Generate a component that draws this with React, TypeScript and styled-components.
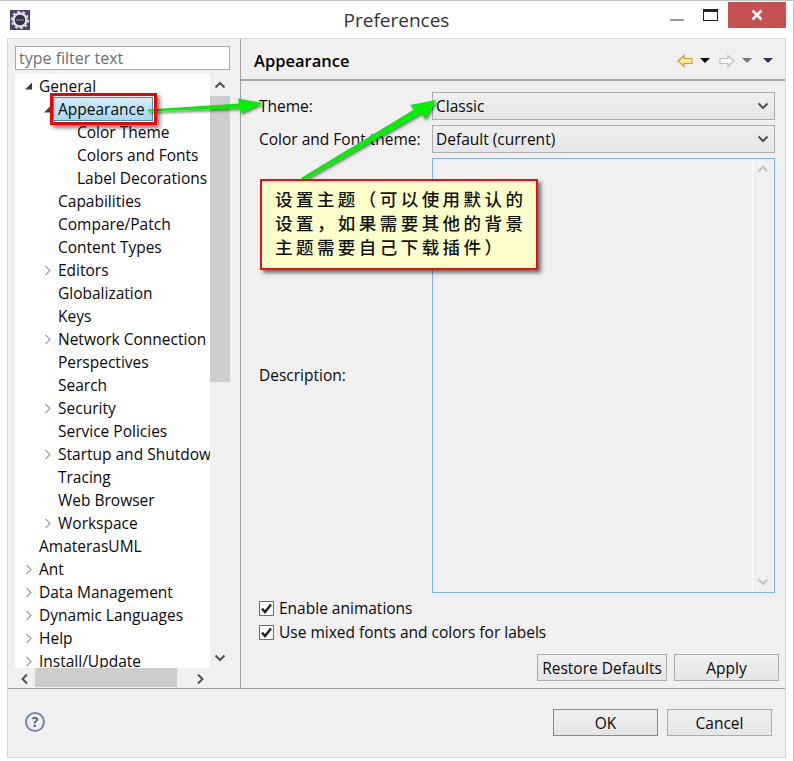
import React from 'react'
import styled, { createGlobalStyle } from 'styled-components'

const GlobalStyle = createGlobalStyle`
  html, body {
    margin: 0;
    padding: 0;
    background: #fff;
    overflow: hidden;
  }
  * {
    box-sizing: border-box;
  }
`

const uiFont = `'Open Sans', 'Noto Sans', sans-serif`

const Page = styled.div`
  position: relative;
  width: 794px;
  height: 761px;
  padding-top: 1px;
  background: #fff;
  border-top: 1px solid #c4c4c4;
  border-right: 1px solid #c4c4c4;
  font-family: ${uiFont};
  font-size: 15.5px;
  color: #0a0a0a;
  overflow: hidden;
`

const TitleBar = styled.div`
  position: relative;
  display: flex;
  align-items: flex-start;
  height: 36px;
  padding-left: 10px;
`

const AppIcon = styled.svg`
  width: 20px;
  height: 20px;
  margin-top: 8px;
`

const Title = styled.div`
  position: absolute;
  left: 0;
  right: 0;
  top: 5px;
  text-align: center;
  font-size: 19px;
  line-height: 26px;
  color: #333;
`

const WindowButtons = styled.div`
  display: flex;
  align-items: flex-start;
  margin-left: auto;
  margin-right: 7px;
`

const MinimizeIcon = styled.span`
  width: 14px;
  height: 2px;
  margin-top: 17px;
  margin-right: 19px;
  background: #9a9a9a;
`

const MaximizeIcon = styled.span`
  width: 15px;
  height: 12px;
  margin-top: 7px;
  margin-right: 10px;
  border: 1px solid #222;
  border-top-width: 3px;
`

const CloseButton = styled.div`
  display: flex;
  align-items: center;
  justify-content: center;
  width: 58px;
  height: 26px;
  background: #c75050;
`

const Body = styled.div`
  width: 779px;
  height: 720px;
  margin-left: 7px;
  background: #f0f0f0;
  border: 1px solid #d9d9d9;
`

const Main = styled.div`
  display: flex;
  height: 649px;
`

const LeftPane = styled.div`
  flex: none;
  width: 232px;
  padding: 7px 10px 0 7px;
`

const FilterInput = styled.div`
  height: 24px;
  padding: 0 3px;
  border: 1px solid #ababab;
  background: #fff;
  line-height: 22px;
  color: #6f6f6f;
  font-size: 16px;
`

const TreeArea = styled.div`
  display: grid;
  grid-template-columns: 195px 20px;
  grid-template-rows: 594px 19px;
  margin-top: 4px;
`

const Tree = styled.div`
  background: #fff;
  overflow: hidden;
`

const Row = styled.div<{ $level: number }>`
  display: flex;
  align-items: center;
  height: 23px;
  padding-left: ${(p) => 8 + p.$level * 19}px;
  white-space: nowrap;
`

const Twisty = styled.svg`
  flex: none;
  width: 16px;
  height: 23px;
`

const RowLabel = styled.span<{ $selected?: boolean }>`
  line-height: 22px;
  padding: 0 4px;
  margin-left: -4px;
  ${(p) =>
    p.$selected &&
    `
    background: linear-gradient(#d4ecf9, #a9d8f0);
    border: 1px solid #4d8ca8;
    margin-left: -5px;
    margin-right: -1px;
    padding-right: 7px;
  `}
`

const VScrollbar = styled.div`
  display: flex;
  flex-direction: column;
  align-items: stretch;
  padding-top: 1px;
`

const ScrollCap = styled.div`
  display: flex;
  align-items: center;
  justify-content: center;
  flex: none;
  width: 20px;
  height: 21px;
`

const VThumb = styled.div`
  height: 286px;
  background: #cdcdcd;
`

const ScrollSpacer = styled.div`
  flex: 1;
`

const HScrollbar = styled.div`
  grid-column: 1 / span 2;
  display: flex;
  align-items: stretch;
`

const HThumb = styled.div`
  width: 142px;
  background: #cdcdcd;
`

const RightPane = styled.div`
  flex: 1;
  border-left: 1px solid #a0a0a0;
`

const PaneHeader = styled.div`
  display: flex;
  align-items: center;
  height: 42px;
  padding: 3px 12px 0 13px;
  border-bottom: 2px solid #a6a6a6;
`

const PaneTitle = styled.h1`
  margin: 0;
  font-size: 16.5px;
  font-weight: 600;
  color: #000;
`

const PaneTools = styled.div`
  display: flex;
  align-items: center;
  margin-left: auto;
`

const ToolArrow = styled.svg<{ $gap?: number }>`
  width: 16px;
  height: 14px;
  margin-left: ${(p) => p.$gap ?? 0}px;
`

const ToolCaret = styled.span<{ $color: string; $gap: number }>`
  width: 0;
  height: 0;
  margin: 0 0 0 ${(p) => p.$gap}px;
  border-left: 5px solid transparent;
  border-right: 5px solid transparent;
  border-top: 5px solid ${(p) => p.$color};
`

const Form = styled.div`
  display: grid;
  grid-template-columns: 173px 343px;
  grid-template-rows: 28px 28px 435px;
  row-gap: 5px;
  margin: 11px 0 0 18px;
`

const FieldLabel = styled.div`
  align-self: center;
`

const DescriptionLabel = styled(FieldLabel)`
  padding-bottom: 2px;
`

const Select = styled.div`
  display: flex;
  align-items: center;
  justify-content: space-between;
  padding: 0 5px 0 3px;
  border: 1px solid #acacac;
  background: linear-gradient(#f0f0f0, #e5e5e5);
`

const DescriptionBox = styled.div`
  display: flex;
  justify-content: flex-end;
  border: 1px solid #7eb4ea;
`

const DescScrollbar = styled.div`
  display: flex;
  flex-direction: column;
  justify-content: space-between;
  width: 22px;
  border-left: 1px solid #fff;
`

const Checks = styled.div`
  margin: 3px 0 0 18px;
`

const CheckRow = styled.div`
  display: flex;
  align-items: center;
  height: 24px;
  gap: 5px;
`

const CheckBox = styled.span`
  display: flex;
  align-items: center;
  justify-content: center;
  width: 15px;
  height: 15px;
  border: 1px solid #707070;
  background: #fff;
`

const PaneActions = styled.div`
  display: flex;
  justify-content: flex-end;
  gap: 7px;
  margin-top: 10px;
  padding-right: 6px;
`

const Button = styled.div<{ $width: number; $focused?: boolean }>`
  display: flex;
  align-items: center;
  justify-content: center;
  width: ${(p) => p.$width}px;
  height: 27px;
  border: 1px solid ${(p) => (p.$focused ? '#3d9bf0' : '#acacac')};
  background: linear-gradient(#f0f0f0, #e5e5e5);
`

const Footer = styled.div`
  display: flex;
  align-items: flex-start;
  height: 69px;
  padding: 20px 13px 0 17px;
  border-top: 1px solid #a0a0a0;
`

const HelpIcon = styled.div`
  width: 20px;
  height: 20px;
  margin-top: 3px;
  border: 2px solid #7485a6;
  border-radius: 50%;
  color: #4c6088;
  font-weight: 700;
  font-size: 14px;
  line-height: 16px;
  text-align: center;
`

const FooterActions = styled.div`
  display: flex;
  gap: 9px;
  margin-left: auto;
`

// screenshot markup lying on top of the dialog
const MarkupLayer = styled.svg`
  position: absolute;
  left: 0;
  top: -1px;
  width: 794px;
  height: 761px;
  pointer-events: none;
`

const RedFrame = styled.div`
  position: absolute;
  left: 50px;
  top: 92px;
  width: 107px;
  height: 32px;
  border: 3px solid #f00000;
  box-shadow: 3px 3px 4px rgba(0, 0, 0, 0.5);
`

const Callout = styled.div`
  position: absolute;
  left: 260px;
  top: 178px;
  width: 278px;
  height: 91px;
  padding: 6px 0 0 13px;
  border: 2px solid #e81010;
  background: #ffffcc;
  box-shadow: 3px 3px 4px rgba(0, 0, 0, 0.55);
  font-family: 'Noto Sans CJK SC', sans-serif;
  font-size: 17.5px;
  font-weight: 500;
  line-height: 24px;
  letter-spacing: 3.45px;
  color: #111;
  white-space: nowrap;
`

type TreeItem = {
  label: string
  level: number
  twisty?: 'open' | 'closed'
  selected?: boolean
}

const treeItems: TreeItem[] = [
  { label: 'General', level: 0, twisty: 'open' },
  { label: 'Appearance', level: 1, twisty: 'open', selected: true },
  { label: 'Color Theme', level: 2 },
  { label: 'Colors and Fonts', level: 2 },
  { label: 'Label Decorations', level: 2 },
  { label: 'Capabilities', level: 1 },
  { label: 'Compare/Patch', level: 1 },
  { label: 'Content Types', level: 1 },
  { label: 'Editors', level: 1, twisty: 'closed' },
  { label: 'Globalization', level: 1 },
  { label: 'Keys', level: 1 },
  { label: 'Network Connection', level: 1, twisty: 'closed' },
  { label: 'Perspectives', level: 1 },
  { label: 'Search', level: 1 },
  { label: 'Security', level: 1, twisty: 'closed' },
  { label: 'Service Policies', level: 1 },
  { label: 'Startup and Shutdown', level: 1, twisty: 'closed' },
  { label: 'Tracing', level: 1 },
  { label: 'Web Browser', level: 1 },
  { label: 'Workspace', level: 1, twisty: 'closed' },
  { label: 'AmaterasUML', level: 0 },
  { label: 'Ant', level: 0, twisty: 'closed' },
  { label: 'Data Management', level: 0, twisty: 'closed' },
  { label: 'Dynamic Languages', level: 0, twisty: 'closed' },
  { label: 'Help', level: 0, twisty: 'closed' },
  { label: 'Install/Update', level: 0, twisty: 'closed' },
]

const Chevron = ({ dir, color = '#505050' }: { dir: 'up' | 'down' | 'left' | 'right'; color?: string }) => {
  const paths = {
    up: 'M1.5 7.5 L6 3 L10.5 7.5',
    down: 'M1.5 3.5 L6 8 L10.5 3.5',
    left: 'M8 1.5 L3.5 6 L8 10.5',
    right: 'M4 1.5 L8.5 6 L4 10.5',
  }
  return (
    <svg width="12" height="12" viewBox="0 0 12 12">
      <path d={paths[dir]} fill="none" stroke={color} strokeWidth="2" />
    </svg>
  )
}

const TreeRow = ({ item }: { item: TreeItem }) => (
  <Row $level={item.level}>
    <Twisty viewBox="0 0 16 23">
      {item.twisty === 'open' && <path d="M2 15.5 L9 15.5 L9 8.5 Z" fill="#404040" />}
      {item.twisty === 'closed' && <path d="M3.5 8 L8 12.5 L3.5 17" fill="none" stroke="#a0a0a0" strokeWidth="1.2" />}
    </Twisty>
    <RowLabel $selected={item.selected}>{item.label}</RowLabel>
  </Row>
)

const Check = () => (
  <svg width="13" height="13" viewBox="0 0 13 13">
    <path d="M2 6.5 L5 10 L11 2.5" fill="none" stroke="#222" strokeWidth="2.4" />
  </svg>
)

const App = () => (
  <Page>
    <GlobalStyle />
    <TitleBar>
      <AppIcon viewBox="0 0 20 20">
        <rect width="20" height="20" fill="#4f3f72" />
        <circle cx="10" cy="10" r="6.5" fill="none" stroke="#dcdcdc" strokeWidth="2.6" />
        <circle cx="10" cy="10" r="8" fill="none" stroke="#dcdcdc" strokeWidth="2.4" strokeDasharray="2.4 2.6" />
        <circle cx="10" cy="10" r="5" fill="#2f2f45" />
        <rect x="6" y="9.4" width="8" height="1.2" fill="#8a8aa0" />
      </AppIcon>
      <Title>Preferences</Title>
      <WindowButtons>
        <MinimizeIcon />
        <MaximizeIcon />
        <CloseButton>
          <svg width="12" height="12" viewBox="0 0 12 12">
            <path d="M1.5 1.5 L10.5 10.5 M10.5 1.5 L1.5 10.5" stroke="#fff" strokeWidth="2.6" />
          </svg>
        </CloseButton>
      </WindowButtons>
    </TitleBar>
    <Body>
      <Main>
        <LeftPane>
          <FilterInput>type filter text</FilterInput>
          <TreeArea>
            <Tree>
              {treeItems.map((item) => (
                <TreeRow key={item.label} item={item} />
              ))}
            </Tree>
            <VScrollbar>
              <ScrollCap>
                <Chevron dir="up" />
              </ScrollCap>
              <VThumb />
              <ScrollSpacer />
              <ScrollCap>
                <Chevron dir="down" />
              </ScrollCap>
            </VScrollbar>
            <HScrollbar>
              <ScrollCap>
                <Chevron dir="left" />
              </ScrollCap>
              <HThumb />
              <ScrollSpacer />
              <ScrollCap>
                <Chevron dir="right" />
              </ScrollCap>
              <ScrollCap />
            </HScrollbar>
          </TreeArea>
        </LeftPane>
        <RightPane>
          <PaneHeader>
            <PaneTitle>Appearance</PaneTitle>
            <PaneTools>
              <ToolArrow viewBox="0 0 16 14">
                <path d="M1 7 L7 1.5 L7 4.5 L15 4.5 L15 9.5 L7 9.5 L7 12.5 Z" fill="#ffe9a8" stroke="#d49a2a" strokeWidth="1.2" />
              </ToolArrow>
              <ToolCaret $color="#000" $gap={7} />
              <ToolArrow viewBox="0 0 16 14" $gap={9}>
                <path d="M15 7 L9 1.5 L9 4.5 L1 4.5 L1 9.5 L9 9.5 L9 12.5 Z" fill="#f5f5f5" stroke="#bdbdbd" strokeWidth="1.2" />
              </ToolArrow>
              <ToolCaret $color="#777" $gap={7} />
              <ToolCaret $color="#3a2a5a" $gap={11} />
            </PaneTools>
          </PaneHeader>
          <Form>
            <FieldLabel>Theme:</FieldLabel>
            <Select>
              Classic
              <Chevron dir="down" />
            </Select>
            <FieldLabel>Color and Font theme:</FieldLabel>
            <Select>
              Default (current)
              <Chevron dir="down" />
            </Select>
            <DescriptionLabel>Description:</DescriptionLabel>
            <DescriptionBox>
              <DescScrollbar>
                <ScrollCap>
                  <Chevron dir="up" color="#c4c4c4" />
                </ScrollCap>
                <ScrollCap>
                  <Chevron dir="down" color="#c4c4c4" />
                </ScrollCap>
              </DescScrollbar>
            </DescriptionBox>
          </Form>
          <Checks>
            <CheckRow>
              <CheckBox>
                <Check />
              </CheckBox>
              Enable animations
            </CheckRow>
            <CheckRow>
              <CheckBox>
                <Check />
              </CheckBox>
              Use mixed fonts and colors for labels
            </CheckRow>
          </Checks>
          <PaneActions>
            <Button $width={130}>Restore Defaults</Button>
            <Button $width={105}>Apply</Button>
          </PaneActions>
        </RightPane>
      </Main>
      <Footer>
        <HelpIcon>?</HelpIcon>
        <FooterActions>
          <Button $width={105} $focused>
            OK
          </Button>
          <Button $width={105}>Cancel</Button>
        </FooterActions>
      </Footer>
    </Body>
    <MarkupLayer viewBox="0 0 794 761">
      <defs>
        <filter id="arrowShadow" x="-20%" y="-20%" width="140%" height="140%">
          <feDropShadow dx="1.5" dy="2" stdDeviation="1.5" floodColor="#000" floodOpacity="0.55" />
        </filter>
      </defs>
      <g filter="url(#arrowShadow)">
        <polygon points="148,109.5 239,103.5 238,98.5 263,103 240,113 239.5,108 148,111.5" fill="#00f000" />
        <polygon points="301,178 414,109.5 410,105 436,100 425,119 421,113 304,180" fill="#00f000" />
      </g>
    </MarkupLayer>
    <RedFrame />
    <Callout>
      设置主题（可以使用默认的
      <br />
      设置，如果需要其他的背景
      <br />
      主题需要自己下载插件）
    </Callout>
  </Page>
)

export default App
